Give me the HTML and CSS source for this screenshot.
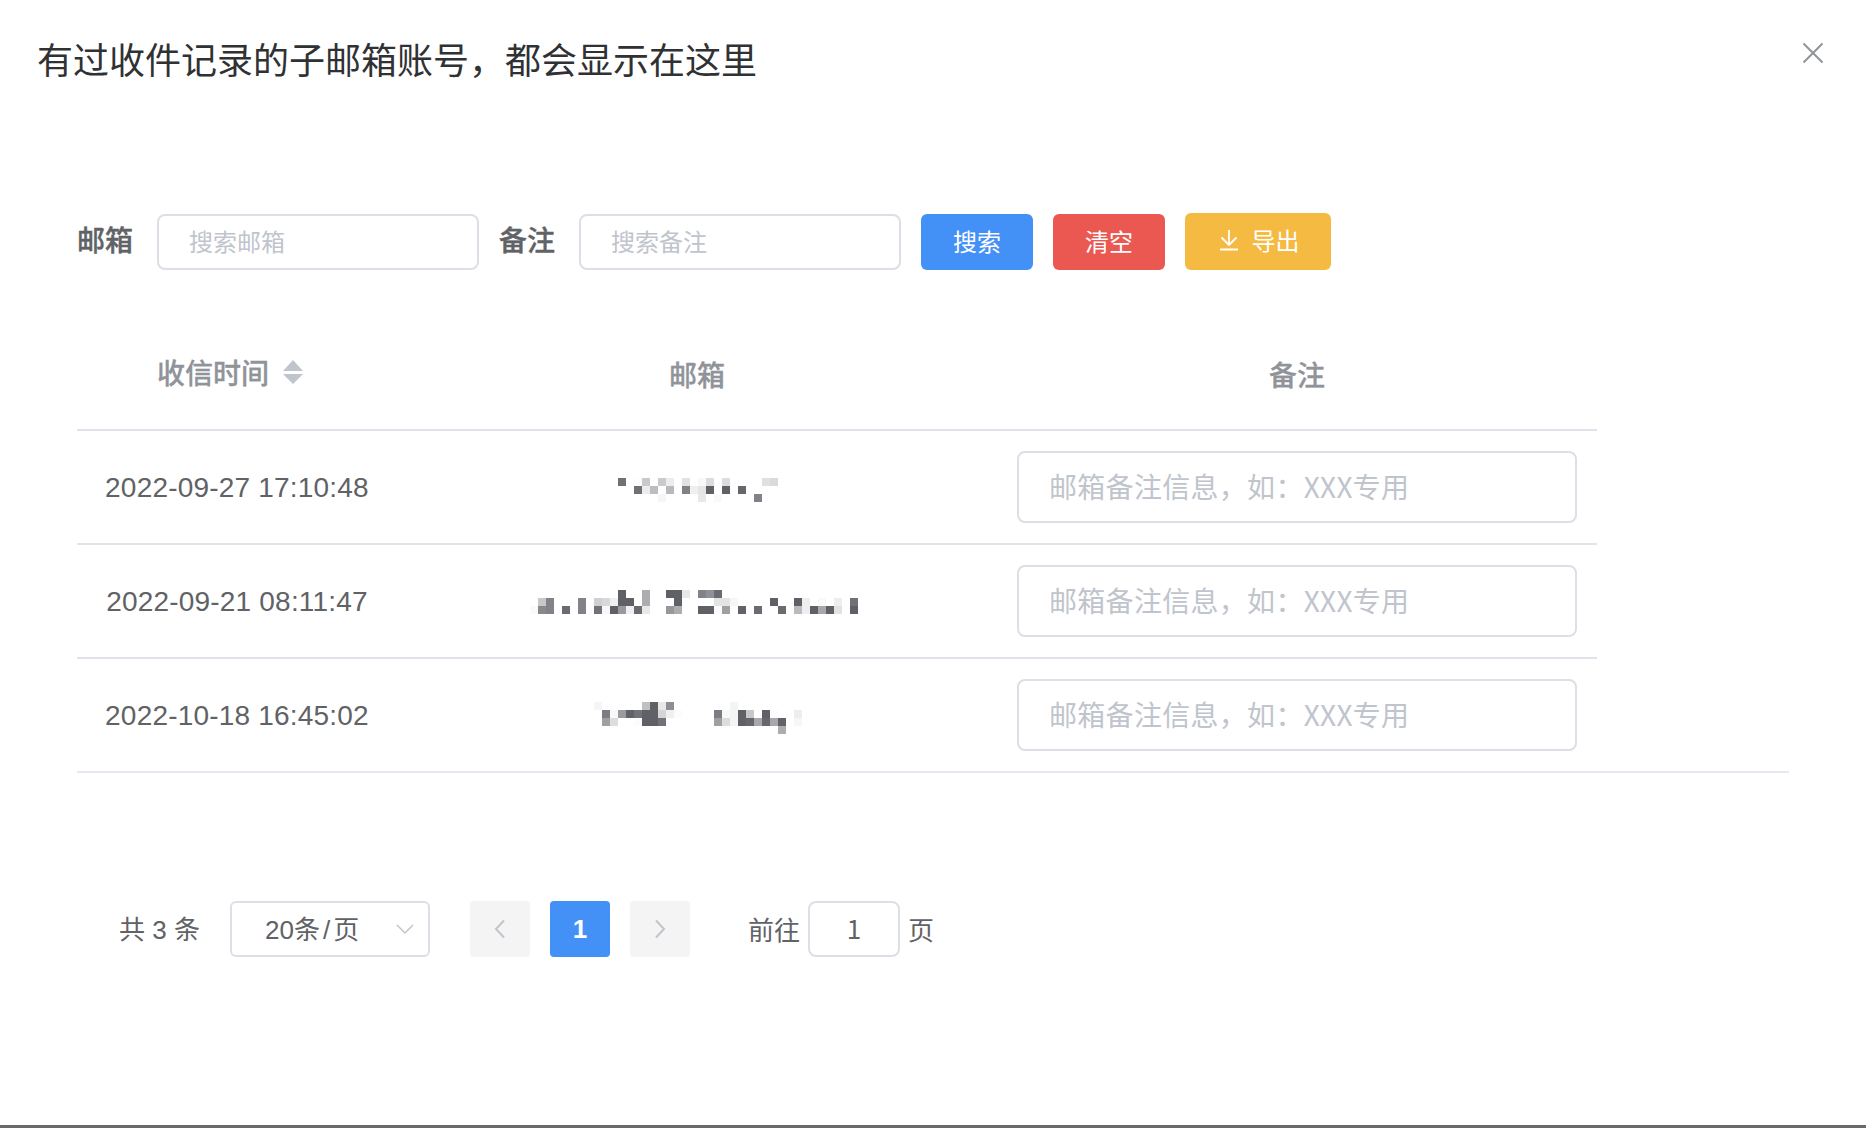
FILE: index.html
```html
<!DOCTYPE html>
<html lang="zh-CN">
<head>
  <meta charset="UTF-8">
  <meta name="viewport" content="width=device-width, initial-scale=1.0">
  <title>子邮箱账号</title>
  <link rel="stylesheet" href="styles.css">
</head>
<body>
  <div class="dialog">
    <header class="dialog-header">
      <h1>有过收件记录的子邮箱账号，都会显示在这里</h1>
      <button class="close" type="button" aria-label="Close">
        <svg width="22" height="22" viewBox="0 0 22 22"><path d="M1.5 1.5l19 19M20.5 1.5l-19 19"/></svg>
      </button>
    </header>

    <main>
      <form class="search">
        <label for="mail">邮箱</label>
        <input class="input" id="mail" type="text" placeholder="搜索邮箱">
        <label for="note">备注</label>
        <input class="input" id="note" type="text" placeholder="搜索备注">
        <button class="btn primary" type="button">搜索</button>
        <button class="btn danger" type="button">清空</button>
        <button class="btn warning" type="button">
          <svg width="20" height="24" viewBox="0 0 20 24"><path d="M10 2v15M2.500 9.500L10 17l7.500-7.500M1 21.500h18"/></svg>
          <span>导出</span>
        </button>
      </form>

      <div class="table">
        <div class="row head">
          <div class="cell time">收信时间
            <svg class="sort" width="20" height="24" viewBox="0 0 20 24"><path d="M0 11L10 0l10 11zM0 14h20L10 24z"/></svg>
          </div>
          <div class="cell">邮箱</div>
          <div class="cell">备注</div>
        </div>
        <div class="row">
          <div class="cell date">2022-09-27 17:10:48</div>
          <div class="cell"><svg class="mosaic" width="336" height="40"></svg></div>
          <div class="cell"><input class="input remark" type="text" placeholder="邮箱备注信息，如：XXX专用"></div>
        </div>
        <div class="row">
          <div class="cell date">2022-09-21 08:11:47</div>
          <div class="cell"><svg class="mosaic" width="336" height="40"></svg></div>
          <div class="cell"><input class="input remark" type="text" placeholder="邮箱备注信息，如：XXX专用"></div>
        </div>
        <div class="row">
          <div class="cell date">2022-10-18 16:45:02</div>
          <div class="cell"><svg class="mosaic" width="336" height="40"></svg></div>
          <div class="cell"><input class="input remark" type="text" placeholder="邮箱备注信息，如：XXX专用"></div>
        </div>
      </div>

      <div class="pagination">
        <span class="total">共 3 条</span>
        <div class="select">
          <span>20条<i>/</i>页</span>
          <svg width="18" height="11" viewBox="0 0 18 11"><path d="M1 1l8 8 8-8"/></svg>
        </div>
        <button class="page" type="button" disabled>
          <svg width="12" height="20" viewBox="0 0 12 20"><path d="M10 1.500L2 10l8 8.500"/></svg>
        </button>
        <button class="page active" type="button">1</button>
        <button class="page" type="button" disabled>
          <svg width="12" height="20" viewBox="0 0 12 20"><path d="M2 1.500L10 10l-8 8.500"/></svg>
        </button>
        <div class="jump">
          <span>前往</span>
          <input class="input" type="text" value="1">
          <span>页</span>
        </div>
      </div>
    </main>
  </div>
  <script src="script.js"></script>
</body>
</html>
```

FILE: styles.css
```css
* {
  box-sizing: border-box;
}

body {
  margin: 0;
  background: #fff;
  color: #606266;
  font-family: "Liberation Sans", "Noto Sans CJK SC", sans-serif;
  font-size: 28px;
}

h1 {
  margin: 0;
  font-size: 36px;
  font-weight: 400;
  line-height: 48px;
  color: #303133;
}

button,
input {
  font-family: inherit;
}

svg {
  display: block;
  flex: none;
}

.dialog {
  height: 1128px;
  border-bottom: 3px solid #6b6969;
}

.dialog-header {
  display: flex;
  justify-content: space-between;
  height: 213px;
  padding: 38px 42px 0 37px;
}

.close {
  height: 22px;
  margin-top: 4px;
  padding: 0;
  border: 0;
  background: none;
}

.close path {
  fill: none;
  stroke: #909399;
  stroke-width: 2;
}

main {
  padding: 0 77px;
}

/* Barra de búsqueda */
.search {
  display: flex;
  align-items: flex-end;
  height: 57px;
}

.search label {
  height: 56px;
  width: 80px;
  line-height: 51px;
  font-weight: 500;
  font-family: "Noto Sans CJK SC", sans-serif;
  -webkit-text-stroke: 0.4px #606266;
}

.search .input {
  width: 322px;
  margin-right: 20px;
}

.input {
  height: 56px;
  padding: 0 30px 4px;
  border: 2px solid #dcdfe6;
  border-radius: 8px;
  background: #fff;
  color: #606266;
  font-family: "Noto Sans CJK SC", sans-serif;
  font-size: 24px;
}

.input::placeholder {
  color: #c0c4cc;
}

.btn {
  display: flex;
  align-items: center;
  justify-content: center;
  width: 112px;
  height: 56px;
  margin-right: 20px;
  padding: 0 0 4px;
  border: 0;
  border-radius: 6px;
  color: #fff;
  font-size: 24px;
}

.primary {
  background: #4391f7;
}

.danger {
  background: #eb5851;
}

.warning {
  gap: 13px;
  width: 146px;
  height: 57px;
  padding-left: 2px;
  background: #f5ba41;
}

.btn path {
  fill: none;
  stroke: #fff;
  stroke-width: 1.8;
}

/* Tabla */
.table {
  margin-top: 49px;
  border-bottom: 2px solid #e6e8f2;
}

.row {
  display: grid;
  grid-template-columns: 320px 600px 600px;
  width: 1520px;
  height: 114px;
  border-bottom: 2px solid #dfe3ea;
}

.row:last-child {
  height: 112px;
  border-bottom: 0;
}

.head {
  height: 112px;
  color: #909399;
  font-weight: 500;
  font-family: "Noto Sans CJK SC", sans-serif;
  -webkit-text-stroke: 0.3px #909399;
}

.cell {
  display: flex;
  align-items: center;
  justify-content: center;
  padding: 0 20px;
}

.date {
  padding-top: 2px;
  letter-spacing: 0.2px;
}

.time {
  gap: 14px;
  padding-bottom: 5px;
  padding-right: 34px;
}

.sort {
  fill: #c0c4cc;
}

.remark {
  width: 560px;
  height: 72px;
  padding-bottom: 2px;
  font-size: 28px;
  letter-spacing: 0.3px;
}

/* Paginación */
.pagination {
  display: flex;
  align-items: center;
  margin-top: 128px;
  padding-left: 42px;
  font-size: 26px;
}

.total {
  width: 111px;
  padding-bottom: 4px;
}

.select {
  display: flex;
  align-items: center;
  justify-content: space-between;
  width: 200px;
  height: 56px;
  margin-right: 40px;
  padding: 0 14px 0 33px;
  border: 2px solid #dcdfe6;
  border-radius: 6px;
}

.select span {
  padding-bottom: 4px;
}

.select i {
  margin: 0 3px;
  font-style: normal;
}

.select path,
.page path {
  fill: none;
  stroke: #c0c4cc;
  stroke-width: 1.5;
}

.page path {
  stroke-width: 2;
}

.page {
  display: flex;
  align-items: center;
  justify-content: center;
  width: 60px;
  height: 56px;
  margin-right: 20px;
  padding: 0;
  border: 0;
  border-radius: 4px;
  background: #f4f4f5;
  font-size: 26px;
}

.active {
  background: #4391f7;
  color: #fff;
  font-weight: 700;
}

.jump {
  display: flex;
  align-items: center;
  gap: 8px;
  margin-left: 38px;
}

.jump span {
  padding-bottom: 2px;
}

.jump .input {
  width: 92px;
  padding: 0 0 4px;
  text-align: center;
  font-size: 26px;
}
```

FILE: script.js
```js
// Direcciones pixeladas: [x, y, filas], cada celda es "columna:color"
const mosaicos = [
  [89, 11, [
    '0:707176 2:fdfdfd 3:c9c9cb 5:cacacc 6:ececee 8:e2e2e2 10:f8f8f8 11:dcdcdd 13:dcdcdd 18:e0e0e0 19:dadada',
    '2:707177 3:ececec 4:bdbdc0 6:b9b9bc 8:808187 9:efefef 10:e5e5e5 11:606166 13:606166 15:66676c',
    '5:f5f7f7 10:e8e8e8 12:f8f9f9 17:828388'
  ]],
  [9, 9, [
    '10:606166 13:adadb0 16:606166 17:606166 18:e8e8e8 20:828389 21:909196 22:6b6c71',
    '0:c6c8ca 1:828388 5:828388 7:d0d0d2 8:d8d8d8 9:f0f0f0 10:606166 11:606166 13:adadb0 17:606166 22:e4e4e4 23:e4e4e4 24:f6f8f8 29:606166 32:606166 33:eeeeee 35:f9fafa 37:eeeeee 39:707176',
    '-1:fafafa 0:88898e 1:828388 3:6b6c71 5:828388 7:727378 8:f8f8f8 9:606166 10:999aa0 11:f0f0f0 12:6b6c71 13:e8e8e8 16:97989c 17:adadb0 20:606166 21:606166 22:fbfbfb 23:9fa0a4 25:626368 27:6b6c71 30:6b6c71 32:bbbbbe 33:eeeeee 34:606166 35:a8a8ac 36:606166 37:e2e2e2 39:606166'
  ]],
  [65, 7, [
    '0:f5f5f5 6:c0c0c2 7:606166 8:e8e8e8 9:8e8f94 17:f3f5f5',
    '1:7c7d82 2:f8f8f8 3:9a9b9f 4:626368 5:727378 6:606166 7:606166 8:d5d5d6 9:f0f0f0 10:fcfcfc 15:7c7d82 16:f9f9f9 17:f3f5f5 18:606166 19:c8c8ca 21:606166 22:fcfcfc 25:eeeeee',
    '1:a0a0a4 2:dddddd 5:fcfcfc 6:606166 7:606166 8:727378 15:a0a0a4 16:dddddd 17:f3f5f5 18:606166 19:66676c 20:a8a8ac 21:66676c 22:a8a8ac 23:626368 25:f7f7f7',
    '23:adadb0'
  ]]
];

document.querySelectorAll('.mosaic').forEach((svg, i) => {
  const [x, y, filas] = mosaicos[i];
  filas.forEach((fila, n) => {
    fila.split(' ').forEach(celda => {
      const [columna, color] = celda.split(':');
      const rect = document.createElementNS('http://www.w3.org/2000/svg', 'rect');
      rect.setAttribute('x', x + columna * 8);
      rect.setAttribute('y', y + n * 8);
      rect.setAttribute('width', 8);
      rect.setAttribute('height', 8);
      rect.setAttribute('fill', '#' + color);
      svg.appendChild(rect);
    });
  });
});
```
